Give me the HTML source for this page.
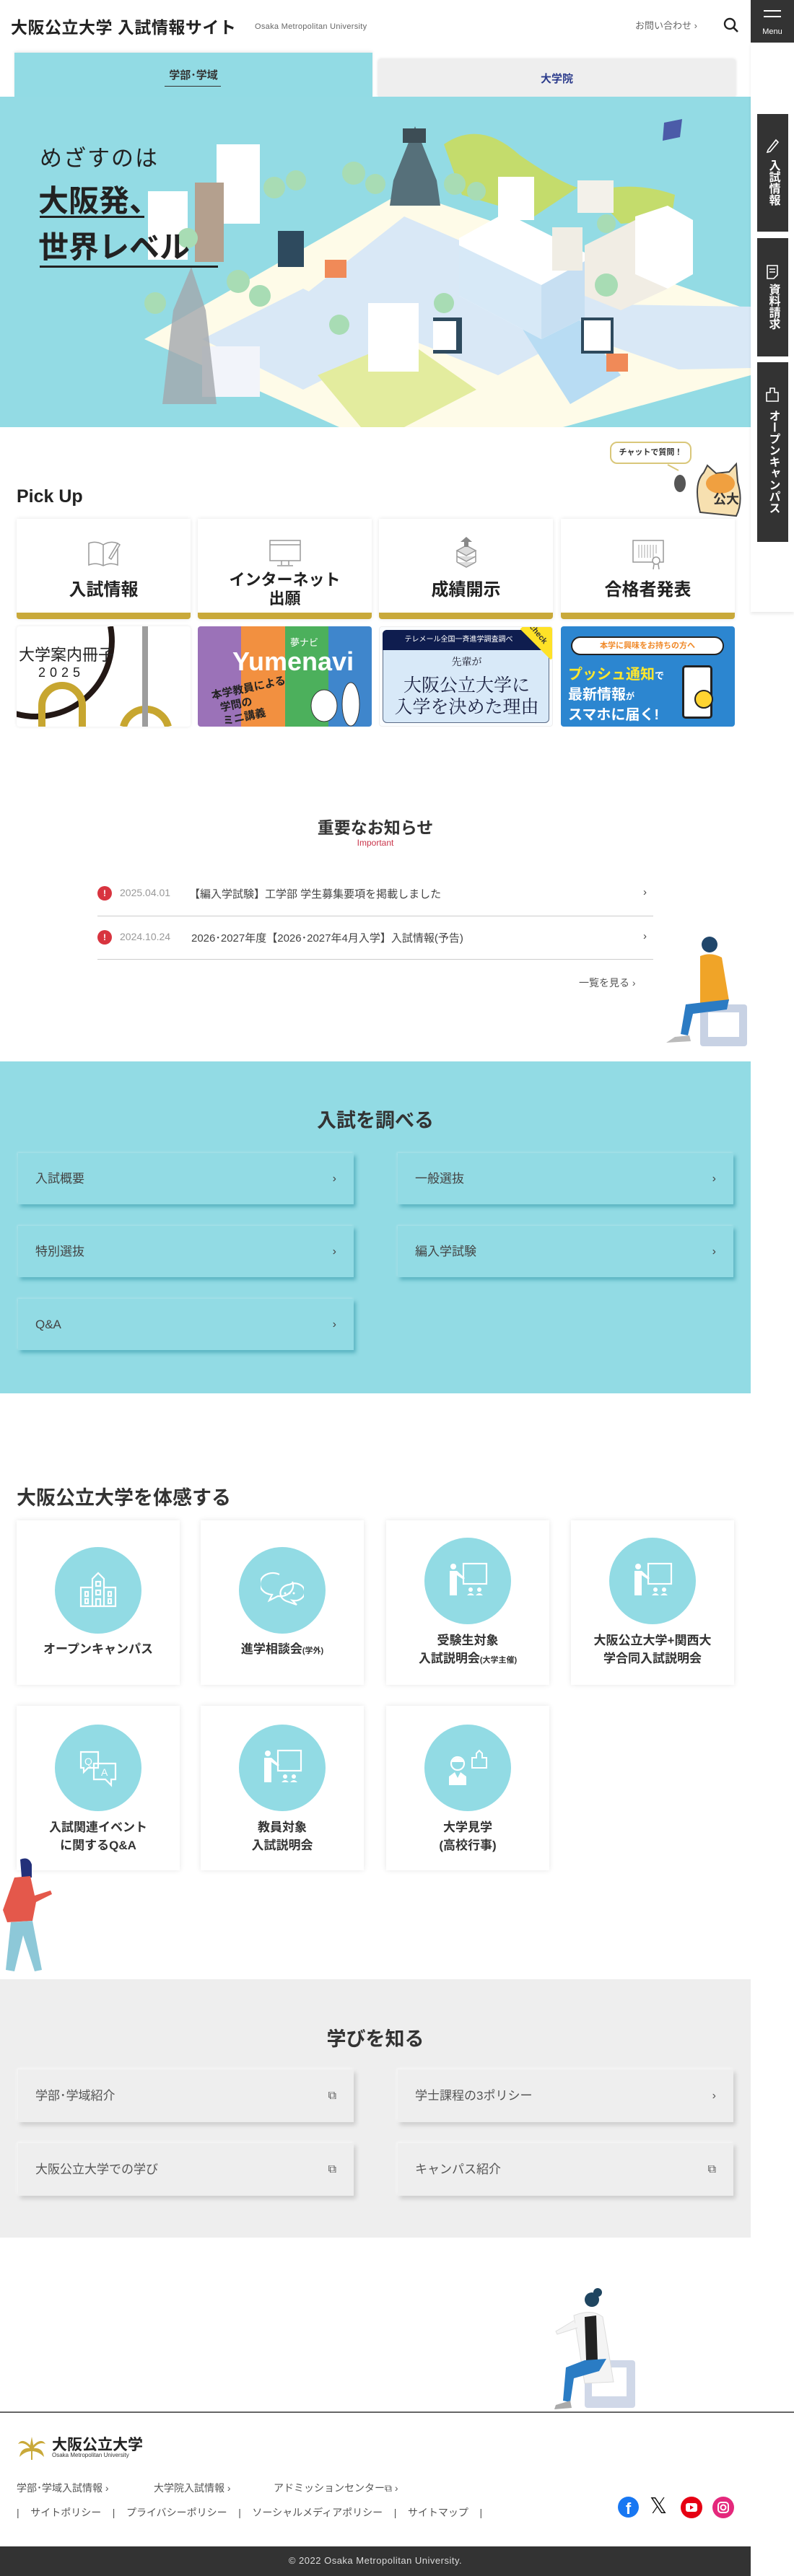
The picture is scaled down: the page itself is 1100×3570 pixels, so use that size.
<!DOCTYPE html>
<html lang="ja"><head><meta charset="utf-8">
<style>
*{margin:0;padding:0;box-sizing:border-box}
body{width:1100px;height:3570px;position:relative;background:#fff;font-family:"Liberation Sans","Noto Sans CJK JP",sans-serif;color:#333;overflow:hidden}
.a{position:absolute}
.ctr{text-align:center}
.pk{position:absolute;top:719px;width:241px;height:139px;background:#fff;box-shadow:0 0 6px rgba(0,0,0,.1);border-bottom:9px solid #c9a93a;border-radius:0 0 4px 4px}
.pk .t{position:absolute;left:0;right:0;text-align:center;font-weight:bold;font-size:24px;color:#222}
.pk svg{position:absolute;left:98px;top:28px}
.bn{position:absolute;top:868px;width:241px;height:139px;overflow:hidden;border-radius:4px}
.cb{position:absolute;width:465px;height:71px;background:#92dbe4;box-shadow:3px 4px 5px rgba(20,130,150,.45),-1px -1px 3px rgba(255,255,255,.3);font-size:17px;color:#444;line-height:71px;padding-left:24px}
.cb .ch,.gb .ch{position:absolute;right:24px;top:0;font-size:16px}
.gb{position:absolute;width:465px;height:73px;background:#eee;box-shadow:3px 4px 6px rgba(0,0,0,.15),-1px -1px 4px rgba(255,255,255,.8);font-size:17px;color:#555;line-height:73px;padding-left:24px}
.tk{position:absolute;width:226px;height:228px;background:#fff;box-shadow:0 0 7px rgba(0,0,0,.1)}
.tk .c{position:absolute;left:53px;width:120px;height:120px;border-radius:50%;background:#92dbe4}
.tk .c svg{position:absolute;left:30px;top:30px}
.tk .t{position:absolute;left:0;right:0;text-align:center;font-weight:bold;font-size:17px;line-height:25px;color:#333}
.tk small{font-size:11px}
.side{position:absolute;left:1049px;width:43px;background:#333;color:#fff;font-size:16px;font-weight:bold;writing-mode:vertical-rl;display:flex;align-items:center;justify-content:center}
.ft a{color:#555;text-decoration:none}
</style></head><body>

<!-- header -->
<div class="a" style="left:15px;top:19px;font-size:23px;font-weight:bold;color:#222;letter-spacing:.5px">大阪公立大学 入試情報サイト</div>
<div class="a" style="left:353px;top:31px;font-size:11px;color:#666;letter-spacing:.3px">Osaka Metropolitan University</div>
<div class="a" style="left:880px;top:25px;font-size:13px;color:#666">お問い合わせ ›</div>
<svg class="a" style="left:1002px;top:24px" width="22" height="22" viewBox="0 0 22 22"><circle cx="9" cy="9" r="7" fill="none" stroke="#222" stroke-width="2.4"/><line x1="14" y1="14" x2="20" y2="20" stroke="#222" stroke-width="2.6"/></svg>
<div class="a" style="left:1040px;top:0;width:60px;height:59px;background:#333"></div>
<div class="a" style="left:1058px;top:14px;width:24px;height:2px;background:#fff"></div>
<div class="a" style="left:1058px;top:22px;width:24px;height:2px;background:#fff"></div>
<div class="a ctr" style="left:1040px;top:38px;width:60px;font-size:11px;color:#fff">Menu</div>

<!-- tabs -->
<div class="a" style="left:20px;top:73px;width:496px;height:62px;background:#92dbe4;box-shadow:0 -2px 4px rgba(0,0,0,.08)"></div>
<div class="a ctr" style="left:20px;top:93px;width:496px;font-size:15px;font-weight:bold;color:#333">学部･学域</div>
<div class="a" style="left:228px;top:119px;width:78px;height:1px;background:#333"></div>
<div class="a" style="left:524px;top:82px;width:495px;height:52px;background:#eee;box-shadow:0 0 4px rgba(0,0,0,.15);border-radius:3px 3px 0 0"></div>
<div class="a ctr" style="left:524px;top:98px;width:495px;font-size:15px;font-weight:bold;color:#2c3c8c">大学院</div>

<!-- hero -->
<div class="a" style="left:0;top:134px;width:1040px;height:458px;background:#93dbe4;overflow:hidden">
<svg width="1040" height="458" viewBox="0 134 1040 458">
<polygon points="200,470 560,265 1040,430 1040,520 780,592 470,592" fill="#fefbe8"/>
<polygon points="560,300 860,430 690,520 420,410" fill="#d9e8f6"/>
<polygon points="720,420 1040,425 1040,510 940,512 820,470" fill="#d9e8f6"/>
<polygon points="280,470 420,400 560,470 420,540" fill="#d9e8f6"/>
<polygon points="440,520 560,470 660,540 560,592 500,592" fill="#e3ec9e"/>
<polygon points="720,450 800,440 860,520 790,560" fill="#b8dcf3"/>
<path d="M615,200 Q665,165 720,215 Q770,250 800,260 L740,300 L640,270 Z" fill="#c4dc6c"/>
<path d="M820,265 Q880,250 935,270 L930,305 L860,310 Z" fill="#c4dc6c"/>
<polygon points="545,250 575,175 605,250 610,285 540,285" fill="#56707a"/>
<rect x="558" y="178" width="32" height="20" fill="#3d4d55"/>
<polygon points="636,330 700,295 810,350 810,440 750,470 636,410" fill="#fff"/>
<polygon points="636,340 750,395 750,470 636,410" fill="#d7e9f7"/>
<polygon points="750,395 810,362 810,440 750,470" fill="#c7dff2"/>
<polygon points="810,340 880,305 925,330 925,400 860,430 810,410" fill="#f1ede4"/>
<polygon points="880,300 925,285 960,305 960,380 925,400 880,380" fill="#fff"/>
<rect x="765" y="315" width="42" height="60" fill="#f0ede4"/>
<rect x="300" y="200" width="60" height="110" fill="#fff"/>
<rect x="270" y="253" width="40" height="110" fill="#b4a08e"/>
<rect x="205" y="265" width="55" height="95" fill="#fff"/>
<rect x="690" y="245" width="50" height="60" fill="#fff"/>
<rect x="800" y="250" width="50" height="45" fill="#f3f1ea"/>
<rect x="510" y="420" width="70" height="95" fill="#fff"/>
<rect x="280" y="480" width="80" height="70" fill="#f2f4fa"/>
<polygon points="240,430 265,370 285,430 300,560 225,560" fill="#a3a7ac" opacity=".8"/>
<g fill="#a8dcb4">
<circle cx="380" cy="260" r="15"/><circle cx="410" cy="250" r="14"/><circle cx="490" cy="240" r="16"/><circle cx="520" cy="255" r="14"/><circle cx="630" cy="255" r="15"/><circle cx="660" cy="265" r="13"/><circle cx="330" cy="390" r="16"/><circle cx="360" cy="410" r="15"/><circle cx="215" cy="420" r="15"/><circle cx="470" cy="450" r="14"/><circle cx="615" cy="420" r="14"/><circle cx="840" cy="395" r="16"/><circle cx="260" cy="330" r="14"/><circle cx="840" cy="310" r="13"/>
</g>
<rect x="385" y="320" width="36" height="50" fill="#2e4a5e"/>
<rect x="600" y="440" width="40" height="50" fill="#2e4a5e"/>
<rect x="600" y="445" width="32" height="40" fill="#fff"/>
<rect x="805" y="440" width="45" height="50" fill="#2e4a5e"/>
<rect x="809" y="444" width="37" height="42" fill="#fff"/>
<rect x="840" y="490" width="30" height="25" fill="#f08a58"/>
<rect x="450" y="360" width="30" height="25" fill="#f08a58"/>
<polygon points="920,170 945,165 942,190 918,195" fill="#4b5ba8"/>
</svg>
</div>
<div class="a" style="left:55px;top:194px;font-size:31px;color:#222;letter-spacing:2px">めざすのは</div>
<div class="a" style="left:53px;top:245px;font-size:42px;font-weight:bold;color:#222">大阪発、</div>
<div class="a" style="left:55px;top:299px;width:145px;height:3px;background:#222"></div>
<div class="a" style="left:53px;top:309px;font-size:42px;font-weight:bold;color:#222">世界レベル</div>
<div class="a" style="left:55px;top:368px;width:247px;height:3px;background:#222"></div>

<!-- right side panel -->
<div class="a" style="left:1040px;top:59px;width:60px;height:789px;background:#fff;box-shadow:0 3px 4px rgba(0,0,0,.08)"></div>
<div class="side" style="top:158px;height:163px;padding-top:26px">入試情報</div>
<svg class="a" style="left:1060px;top:190px" width="20" height="22" viewBox="0 0 20 22"><path d="M4,18 L15,4 L18,7 L7,20 L3,21 Z" fill="none" stroke="#fff" stroke-width="1.6"/></svg>
<div class="side" style="top:330px;height:164px;padding-top:26px">資料請求</div>
<svg class="a" style="left:1061px;top:367px" width="18" height="20" viewBox="0 0 18 20"><path d="M2,1 H16 V14 L11,19 H2 Z M5,6 H13 M5,10 H13" fill="none" stroke="#fff" stroke-width="1.6"/></svg>
<div class="side" style="top:502px;height:249px;padding-top:26px">オープンキャンパス</div>
<svg class="a" style="left:1061px;top:537px" width="18" height="20" viewBox="0 0 18 20"><path d="M6,1 H12 V7 H17 V19 H1 V7 H6 Z" fill="none" stroke="#fff" stroke-width="1.6"/></svg>

<!-- chat -->
<div class="a ctr" style="left:845px;top:612px;width:113px;height:31px;border:2px solid #d9c77a;border-radius:10px;background:#fff;font-size:11px;font-weight:bold;line-height:27px">チャットで質問！</div>
<svg class="a" style="left:920px;top:640px" width="110" height="80" viewBox="0 0 110 80"><path d="M5,4 L20,12" stroke="#d9c77a" stroke-width="2"/><ellipse cx="22" cy="30" rx="8" ry="12" fill="#555"/><path d="M50,70 Q40,30 55,15 L60,5 L72,16 L90,14 L100,3 L102,28 Q110,55 100,75 Z" fill="#f7e0b0" stroke="#444" stroke-width="2"/><ellipse cx="78" cy="30" rx="20" ry="14" fill="#f0a040"/><text x="68" y="58" font-size="18" font-weight="bold" fill="#333" font-family="Noto Sans CJK JP">公大</text></svg>

<!-- pickup -->
<div class="a" style="left:23px;top:674px;font-size:25px;font-weight:bold;color:#222">Pick Up</div>
<div class="pk" style="left:23px"><svg width="46" height="40" viewBox="0 0 46 40"><path d="M2,6 Q12,2 22,8 Q32,2 42,6 V36 Q32,32 22,37 Q12,32 2,36 Z M22,8 V37" fill="none" stroke="#999" stroke-width="1.5"/><path d="M30,26 L42,6 L45,8 L33,28 Z" fill="#fff" stroke="#999" stroke-width="1.5"/></svg><div class="t" style="top:78px">入試情報</div></div>
<div class="pk" style="left:274px"><svg width="46" height="40" viewBox="0 0 46 40"><rect x="2" y="2" width="42" height="28" fill="none" stroke="#999" stroke-width="1.5"/><path d="M2,8 H44 M18,30 V36 M28,30 V36 M12,37 H34" fill="none" stroke="#999" stroke-width="1.5"/></svg><div class="t" style="top:72px;font-size:22px;line-height:26px">インターネット<br>出願</div></div>
<div class="pk" style="left:525px"><svg width="46" height="48" viewBox="0 0 46 48" style="top:22px"><path d="M10,22 L23,15 L36,22 L23,29 Z M10,30 L23,37 L36,30 M10,38 L23,45 L36,38 M10,22 V38 M36,22 V38" fill="#ddd" stroke="#999" stroke-width="1.5"/><path d="M15,10 L23,3 L31,10 Z" fill="#888"/><rect x="20" y="9" width="6" height="8" fill="#888"/></svg><div class="t" style="top:78px">成績開示</div></div>
<div class="pk" style="left:777px"><svg width="46" height="44" viewBox="0 0 46 44"><rect x="2" y="2" width="42" height="30" fill="none" stroke="#999" stroke-width="1.5"/><path d="M10,8 V26 M14,8 V26 M18,8 V26 M22,8 V26 M26,8 V26 M30,8 V26 M34,8 V20" stroke="#aaa"/><circle cx="34" cy="30" r="5" fill="#fff" stroke="#999" stroke-width="1.5"/><path d="M31,35 L30,42 M37,35 L38,42" stroke="#999" stroke-width="1.5"/></svg><div class="t" style="top:78px">合格者発表</div></div>

<!-- banners -->
<div class="bn" style="left:23px;background:#fff;box-shadow:0 0 4px rgba(0,0,0,.1)">
<svg width="241" height="139" viewBox="0 0 241 139"><path d="M130,0 A105,105 0 0 1 -5,120" fill="none" stroke="#231815" stroke-width="8"/><path d="M35,139 V110 A28,28 0 0 1 91,110 V139" fill="none" stroke="#c7a630" stroke-width="10"/><path d="M148,139 A32,32 0 0 1 210,139" fill="none" stroke="#c7a630" stroke-width="10"/><rect x="174" y="0" width="8" height="139" fill="#9d9d9d"/></svg>
<div class="a" style="left:3px;top:22px;font-size:22px;color:#222">大学案内冊子</div>
<div class="a" style="left:30px;top:54px;font-size:18px;color:#222;letter-spacing:6px">2025</div>
</div>
<div class="bn" style="left:274px;display:flex"><div style="flex:1;background:#9b72b8"></div><div style="flex:1;background:#f29040"></div><div style="flex:1;background:#4cb05c"></div><div style="flex:1;background:#3f86cc"></div>
<div class="a" style="left:48px;top:28px;font-size:36px;font-weight:bold;color:#fff;font-family:'Liberation Sans',sans-serif">Yumenavi</div>
<div class="a" style="left:128px;top:12px;font-size:13px;color:#fff">夢ナビ</div>
<div class="a" style="left:22px;top:76px;font-size:15px;font-weight:bold;color:#222;line-height:19px;transform:rotate(-12deg)">本学教員による<br>&nbsp;&nbsp;学問の<br>&nbsp;&nbsp;ミニ講義</div>
<svg class="a" style="left:150px;top:70px" width="80" height="70"><ellipse cx="25" cy="40" rx="18" ry="22" fill="#fff" stroke="#333"/><ellipse cx="62" cy="38" rx="12" ry="30" fill="#fff" stroke="#333"/></svg>
</div>
<div class="bn" style="left:525px;background:#fbfdff;border:1px solid #eee">
<div class="a" style="left:4px;top:4px;width:231px;height:129px;background:#d8e9f8;border:1.5px solid #5a6b86;border-radius:6px"></div>
<div class="a ctr" style="left:4px;top:4px;width:231px;height:28px;background:#0f1d4f;color:#fff;font-size:10px;line-height:28px;border-radius:6px 6px 0 0;padding-right:20px">テレメール全国一斉進学調査調べ</div>
<div class="a" style="left:200px;top:-10px;width:60px;height:40px;background:#ffe227;transform:rotate(45deg)"></div>
<div class="a" style="left:204px;top:4px;font-size:11px;font-weight:bold;transform:rotate(50deg)">check</div>
<div class="a ctr" style="left:0;top:38px;width:241px;font-size:14px;font-family:'Noto Serif CJK SC',serif;color:#223">先輩が</div>
<div class="a ctr" style="left:0;top:64px;width:241px;font-size:25px;line-height:30px;font-family:'Noto Serif CJK SC',serif;color:#1a2040">大阪公立大学に<br>入学を決めた理由</div>
</div>
<div class="bn" style="left:777px;background:#2c86d0">
<div class="a ctr" style="left:14px;top:14px;width:212px;height:26px;background:#fff;border:2px solid #222;border-radius:13px;font-size:11px;font-weight:bold;color:#f08a2a;line-height:22px">本学に興味をお持ちの方へ</div>
<div class="a" style="left:10px;top:54px;font-size:20px;font-weight:bold;color:#ffe72c;line-height:26px">プッシュ通知<span style="color:#fff;font-size:13px">で</span><br><span style="color:#fff">最新情報<small style="font-size:12px">が</small><br>スマホに届く!</span></div>
<div class="a" style="left:168px;top:54px;width:42px;height:74px;background:#fff;border:3px solid #222;border-radius:5px"></div>
<div class="a" style="left:185px;top:88px;width:26px;height:26px;background:#ffd431;border:2px solid #222;border-radius:50%"></div>
</div>

<!-- important -->
<div class="a ctr" style="left:0;top:1128px;width:1040px;font-size:23px;font-weight:bold;color:#333">重要なお知らせ</div>
<div class="a ctr" style="left:0;top:1161px;width:1040px;font-size:12px;color:#c9344a">Important</div>
<div class="a" style="left:135px;top:1228px;width:20px;height:20px;border-radius:50%;background:#d8343f;color:#fff;font-size:12px;font-weight:bold;text-align:center;line-height:20px">!</div>
<div class="a" style="left:166px;top:1229px;font-size:14px;color:#999">2025.04.01</div>
<div class="a" style="left:262px;top:1228px;font-size:15px;color:#444">【編入学試験】工学部 学生募集要項を掲載しました</div>
<div class="a" style="left:891px;top:1228px;font-size:15px;color:#444">›</div>
<div class="a" style="left:135px;top:1269px;width:770px;height:1px;background:#ccc"></div>
<div class="a" style="left:135px;top:1289px;width:20px;height:20px;border-radius:50%;background:#d8343f;color:#fff;font-size:12px;font-weight:bold;text-align:center;line-height:20px">!</div>
<div class="a" style="left:166px;top:1290px;font-size:14px;color:#999">2024.10.24</div>
<div class="a" style="left:265px;top:1289px;font-size:15px;color:#444">2026･2027年度【2026･2027年4月入学】入試情報(予告)</div>
<div class="a" style="left:891px;top:1289px;font-size:15px;color:#444">›</div>
<div class="a" style="left:135px;top:1329px;width:770px;height:1px;background:#ccc"></div>
<div class="a" style="left:802px;top:1352px;font-size:14px;color:#555">一覧を見る ›</div>
<svg class="a" style="left:915px;top:1297px" width="125" height="155" viewBox="0 0 125 155"><rect x="55" y="95" width="65" height="58" rx="4" fill="#c8d2e4"/><rect x="66" y="106" width="43" height="34" fill="#fff"/><circle cx="68" cy="12" r="11" fill="#20466b"/><path d="M55,28 Q70,22 85,30 L95,90 L55,95 Z" fill="#f0a428"/><path d="M60,92 L95,88 L92,102 L45,108 L38,138 L28,136 L35,95 Z" fill="#2b7bc3"/><path d="M20,140 L40,138 L42,146 L8,148 Z" fill="#bbb"/></svg>

<!-- 入試を調べる -->
<div class="a" style="left:0;top:1471px;width:1040px;height:460px;background:#92dbe4"></div>
<div class="a ctr" style="left:0;top:1531px;width:1040px;font-size:27px;font-weight:bold;color:#333">入試を調べる</div>
<div class="cb" style="left:25px;top:1598px">入試概要<span class="ch">›</span></div>
<div class="cb" style="left:551px;top:1598px">一般選抜<span class="ch">›</span></div>
<div class="cb" style="left:25px;top:1699px">特別選抜<span class="ch">›</span></div>
<div class="cb" style="left:551px;top:1699px">編入学試験<span class="ch">›</span></div>
<div class="cb" style="left:25px;top:1800px">Q&amp;A<span class="ch">›</span></div>

<!-- 体感 -->
<div class="a" style="left:23px;top:2054px;font-size:27px;font-weight:bold;color:#333">大阪公立大学を体感する</div>

<div class="tk" style="left:23px;top:2107px"><div class="c" style="top:37px"><svg width="60" height="60" viewBox="0 0 60 60"><path d="M6,52 V26 H22 V14 L30,6 L38,14 V26 H54 V52 Z M22,26 V52 M38,26 V52 M12,32 H16 V38 H12 Z M12,42 H16 V48 H12Z M44,32 H48 V38 H44Z M44,42 H48 V48 H44Z M27,18 H33 V24 H27Z M27,30 H33 V36 H27Z M27,42 H33 V52 H27Z" fill="none" stroke="#fff" stroke-width="2.2"/></svg></div><div class="t" style="top:166px">オープンキャンパス</div></div>
<div class="tk" style="left:278px;top:2107px"><div class="c" style="top:37px"><svg width="60" height="60" viewBox="0 0 60 60"><path d="M26,8 A18,15 0 1 0 16,36 L12,44 L24,38 A18,15 0 0 0 44,18" fill="none" stroke="#fff" stroke-width="2.2"/><path d="M40,22 A14,12 0 1 1 44,44 L50,50 L36,45 A14,12 0 0 1 40,22 Z" fill="none" stroke="#fff" stroke-width="2.2"/><circle cx="34" cy="34" r="1.5" fill="#fff"/><circle cx="40" cy="34" r="1.5" fill="#fff"/><circle cx="46" cy="34" r="1.5" fill="#fff"/></svg></div><div class="t" style="top:166px">進学相談会<small>(学外)</small></div></div>
<div class="tk" style="left:535px;top:2107px"><div class="c" style="top:24px"><svg width="60" height="60" viewBox="0 0 60 60"><rect x="24" y="6" width="32" height="28" fill="none" stroke="#fff" stroke-width="2.2"/><circle cx="10" cy="10" r="4" fill="#fff"/><path d="M5,16 H15 L26,26 L24,28 L15,22 V50 H5 Z" fill="#fff"/><circle cx="34" cy="42" r="3" fill="#fff"/><circle cx="46" cy="42" r="3" fill="#fff"/><path d="M29,50 Q34,44 39,50 Z M41,50 Q46,44 51,50 Z" fill="#fff"/></svg></div><div class="t" style="top:154px">受験生対象<br>入試説明会<small>(大学主催)</small></div></div>
<div class="tk" style="left:791px;top:2107px"><div class="c" style="top:24px"><svg width="60" height="60" viewBox="0 0 60 60"><rect x="24" y="6" width="32" height="28" fill="none" stroke="#fff" stroke-width="2.2"/><circle cx="10" cy="10" r="4" fill="#fff"/><path d="M5,16 H15 L26,26 L24,28 L15,22 V50 H5 Z" fill="#fff"/><circle cx="34" cy="42" r="3" fill="#fff"/><circle cx="46" cy="42" r="3" fill="#fff"/><path d="M29,50 Q34,44 39,50 Z M41,50 Q46,44 51,50 Z" fill="#fff"/></svg></div><div class="t" style="top:154px">大阪公立大学+関西大<br>学合同入試説明会</div></div>

<div class="tk" style="left:23px;top:2364px"><div class="c" style="top:26px"><svg width="60" height="60" viewBox="0 0 60 60"><path d="M6,8 H30 V30 H16 L10,36 V30 H6 Z" fill="none" stroke="#fff" stroke-width="2.2"/><path d="M24,24 H54 V46 H48 V54 L40,46 H24 Z" fill="none" stroke="#fff" stroke-width="2.2"/><text x="11" y="26" font-size="14" fill="#fff" font-family="Liberation Sans">Q</text><text x="34" y="41" font-size="14" fill="#fff" font-family="Liberation Sans">A</text></svg></div><div class="t" style="top:156px">入試関連イベント<br>に関するQ&amp;A</div></div>
<div class="tk" style="left:278px;top:2364px"><div class="c" style="top:26px"><svg width="60" height="60" viewBox="0 0 60 60"><rect x="24" y="6" width="32" height="28" fill="none" stroke="#fff" stroke-width="2.2"/><circle cx="10" cy="10" r="4" fill="#fff"/><path d="M5,16 H15 L26,26 L24,28 L15,22 V50 H5 Z" fill="#fff"/><circle cx="34" cy="42" r="3" fill="#fff"/><circle cx="46" cy="42" r="3" fill="#fff"/><path d="M29,50 Q34,44 39,50 Z M41,50 Q46,44 51,50 Z" fill="#fff"/></svg></div><div class="t" style="top:156px">教員対象<br>入試説明会</div></div>
<div class="tk" style="left:535px;top:2364px"><div class="c" style="top:26px"><svg width="60" height="60" viewBox="0 0 60 60"><circle cx="16" cy="24" r="9" fill="none" stroke="#fff" stroke-width="2.2"/><path d="M7,22 Q16,10 25,22" fill="#fff"/><path d="M4,54 V42 L12,36 L16,44 L20,36 L28,42 V54 Z" fill="#fff"/><path d="M36,30 V16 H42 V10 L46,6 L50,10 V16 H56 V30 Z" fill="none" stroke="#fff" stroke-width="2"/></svg></div><div class="t" style="top:156px">大学見学<br>(高校行事)</div></div>
<svg class="a" style="left:0;top:2572px" width="100" height="168" viewBox="0 0 100 168"><path d="M28,5 Q40,0 44,12 L44,30 L30,30 Z" fill="#23307a"/><path d="M20,30 L42,28 L48,55 L70,48 L72,53 L50,64 L45,90 L10,92 L4,75 Z" fill="#e4584b"/><path d="M15,92 L45,90 L58,158 L48,160 L32,110 L20,160 L8,158 Z" fill="#8dc8d8"/></svg>

<!-- 学びを知る -->
<div class="a" style="left:0;top:2743px;width:1040px;height:358px;background:#eee"></div>
<div class="a ctr" style="left:0;top:2804px;width:1040px;font-size:27px;font-weight:bold;color:#333">学びを知る</div>
<div class="gb" style="left:25px;top:2868px">学部･学域紹介<span class="ch">⧉</span></div>
<div class="gb" style="left:551px;top:2868px">学士課程の3ポリシー<span class="ch">›</span></div>
<div class="gb" style="left:25px;top:2970px">大阪公立大学での学び<span class="ch">⧉</span></div>
<div class="gb" style="left:551px;top:2970px">キャンパス紹介<span class="ch">⧉</span></div>

<svg class="a" style="left:750px;top:3171px" width="140" height="172" viewBox="0 0 140 172"><rect x="60" y="100" width="70" height="66" rx="4" fill="#d0d8e8"/><rect x="70" y="110" width="48" height="40" fill="#fff"/><circle cx="70" cy="16" r="10" fill="#1f4560"/><circle cx="78" cy="6" r="6" fill="#1f4560"/><path d="M45,38 Q70,28 85,40 L100,130 L60,132 Z" fill="#f4f4f4" stroke="#ddd"/><path d="M60,40 L76,38 L78,100 L62,100 Z" fill="#222"/><path d="M60,100 L90,98 L80,115 L45,125 L40,158 L30,156 L34,110 Z" fill="#2a7cc4"/><path d="M20,162 L40,156 L42,166 L18,168 Z" fill="#aaa"/><path d="M45,45 L20,60 L22,64 L50,55" fill="#f4f4f4" stroke="#ddd"/></svg>

<!-- footer -->
<div class="a" style="left:0;top:3342px;width:1100px;height:2px;background:#666"></div>
<svg class="a" style="left:23px;top:3373px" width="42" height="36" viewBox="0 0 42 36"><g fill="#c9a93a"><path d="M21,4 L18,20 L24,20 Z"/><path d="M21,18 Q8,4 2,14 Q12,10 20,22 Z"/><path d="M21,18 Q34,4 40,14 Q30,10 22,22 Z"/><path d="M20,20 Q6,18 4,32 Q12,24 21,24 Z"/><path d="M22,20 Q36,18 38,32 Q30,24 21,24 Z"/><rect x="20" y="20" width="2" height="16"/></g></svg>
<div class="a" style="left:72px;top:3372px;font-size:21px;color:#222;font-weight:bold">大阪公立大学</div>
<div class="a" style="left:72px;top:3398px;font-size:8px;color:#333">Osaka Metropolitan University</div>
<div class="a ft" style="left:23px;top:3438px;font-size:14px;color:#555">学部･学域入試情報 ›</div>
<div class="a ft" style="left:213px;top:3438px;font-size:14px;color:#555">大学院入試情報 ›</div>
<div class="a ft" style="left:379px;top:3438px;font-size:14px;color:#555">アドミッションセンター⧉ ›</div>
<div class="a" style="left:23px;top:3472px;font-size:14px;color:#555;white-space:pre">|    サイトポリシー    |    プライバシーポリシー    |    ソーシャルメディアポリシー    |    サイトマップ    |</div>
<div class="a" style="left:856px;top:3460px;width:29px;height:29px;border-radius:50%;background:#1877f2;color:#fff;font-weight:bold;font-size:22px;text-align:center;line-height:34px;font-family:'Liberation Sans',sans-serif;overflow:hidden">f</div>
<div class="a" style="left:900px;top:3456px;font-size:30px;color:#111;font-family:'DejaVu Sans',sans-serif">𝕏</div>
<svg class="a" style="left:943px;top:3460px" width="30" height="30" viewBox="0 0 30 30"><circle cx="15" cy="15" r="15" fill="#e60012"/><rect x="7" y="9" width="16" height="12" rx="3" fill="#fff"/><path d="M13,12 L18,15 L13,18 Z" fill="#e60012"/></svg>
<svg class="a" style="left:987px;top:3460px" width="30" height="30" viewBox="0 0 30 30"><circle cx="15" cy="15" r="15" fill="#e4287c"/><rect x="8" y="8" width="14" height="14" rx="4" fill="none" stroke="#fff" stroke-width="2"/><circle cx="15" cy="15" r="3.5" fill="none" stroke="#fff" stroke-width="2"/></svg>
<div class="a" style="left:0;top:3529px;width:1040px;height:41px;background:#333"></div>
<div class="a ctr" style="left:0;top:3541px;width:1040px;font-size:13px;color:#ddd;letter-spacing:.5px">© 2022 Osaka Metropolitan University.</div>
</body></html>
